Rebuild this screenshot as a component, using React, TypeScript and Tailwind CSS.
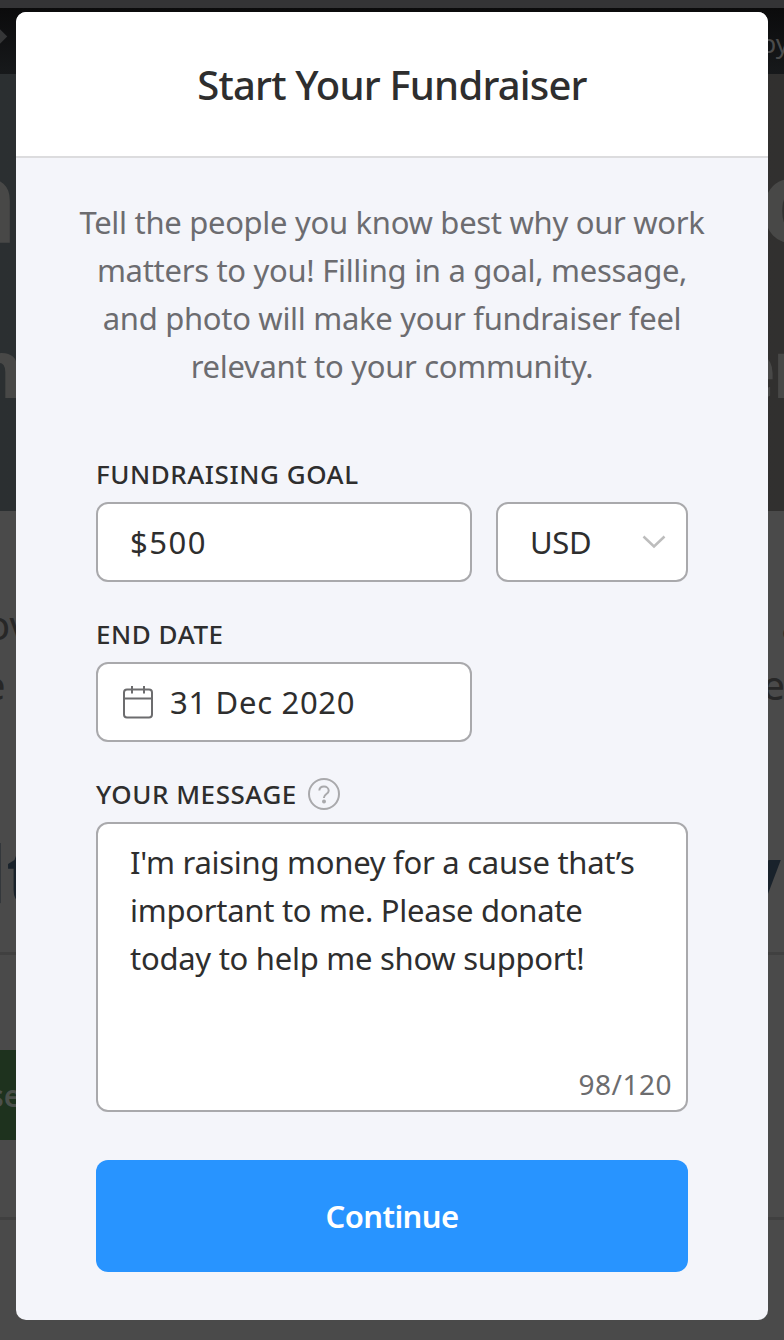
import { useState } from 'react';

const body = 'text-[31px] leading-[48px] text-[#2e2e2e]';
const field = 'flex items-center h-20 bg-white border-2 border-[#a9a9ac] rounded-xl';
const label =
  'text-[26px] leading-8 font-medium uppercase tracking-[0.55px] text-[#2e2e2e]';

function CalendarIcon() {
  return (
    <svg
      width="32"
      height="34"
      viewBox="0 0 32 34"
      fill="none"
      stroke="#6c6c6e"
      strokeWidth="2"
    >
      <rect x="2" y="4.5" width="28" height="28" rx="3" />
      <path d="M2 13.5h28M10 1v7.5M22 1v7.5" />
    </svg>
  );
}

function ChevronIcon() {
  return (
    <svg
      width="24"
      height="14"
      viewBox="0 0 24 14"
      fill="none"
      stroke="#bdbdbd"
      strokeWidth="2.5"
    >
      <path d="M1.5 1.5L12 11.5L22.5 1.5" />
    </svg>
  );
}

function HelpIcon() {
  return (
    <svg
      width="32"
      height="32"
      viewBox="0 0 32 32"
      fill="none"
      stroke="#a9a9ac"
      strokeWidth="2"
    >
      <circle cx="16" cy="16" r="15" />
      <path d="M11.3 12.5C11.5 10 13.5 8.5 16 8.5S20.7 10.2 20.7 12.7C20.7 16 16 16 16 19.5V20" />
      <circle cx="16" cy="23.6" r="2" fill="#a9a9ac" stroke="none" />
    </svg>
  );
}

// The dimmed campaign page behind the modal
function Page() {
  return (
    <div className="flex flex-col h-full overflow-hidden bg-[#4a4a4a] whitespace-nowrap">
      <div className="h-2 shrink-0 bg-[#343436]" />
      <div className="flex justify-between h-[66px] shrink-0 bg-linear-to-b from-[#0b0b0c] to-[#17191b] text-[26px] leading-[66px] text-[#4b4b4b]">
        <span className="size-[11px] -ml-[6px] mt-[23px] rotate-45 bg-[#353637]" />
        <span className="-mr-[5px] mt-[2px]">by</span>
      </div>

      <div className="flex justify-between h-[437px] shrink-0 bg-linear-to-r from-[#2b2f31] to-[#31302f] font-bold text-[#484847]">
        <div className="flex flex-col items-start">
          <span className="-ml-[52px] mt-[54px] text-[117px] leading-[140px]">a</span>
          <span className="-ml-[29px] mt-[49px] text-[80px] leading-[100px]">n</span>
        </div>
        <div className="flex flex-col items-end">
          <span className="-mr-[48px] mt-[54px] text-[117px] leading-[140px]">o</span>
          <span className="-mr-[20px] mt-[49px] text-[80px] leading-[100px] tracking-[-4px]">
            er
          </span>
        </div>
      </div>

      <div className="flex justify-between mt-[84px] text-[40px] leading-[60px] text-[#272727]">
        <span className="-ml-[14px]">ov</span>
        <span className="-mr-[20px]">a</span>
      </div>
      <div className="flex justify-between text-[40px] leading-[60px] text-[#272727]">
        <span className="-ml-[17px]">e w</span>
        <span className="-mr-[1px]">e</span>
      </div>

      <div className="flex justify-between mt-[108px] text-[78px] leading-[100px] font-bold text-[#19222b]">
        <span className="-ml-[17px]">lt</span>
        <span className="-mr-[36px]">vs</span>
      </div>
      <div className="h-[3px] shrink-0 mt-[29px] bg-[#404040]" />

      <div className="flex items-center w-[200px] h-[90px] shrink-0 mt-[95px] bg-[#1e321e] text-[30px] font-semibold text-[#4b504b]">
        <span className="-ml-[11px]">se</span>
      </div>
      <div className="h-[3px] shrink-0 mt-[77px] bg-[#404040]" />
    </div>
  );
}

function FundraiserModal() {
  const [goal, setGoal] = useState('$500');
  const [message, setMessage] = useState(
    "I'm raising money for a cause that’s important to me. Please donate today to help me show support!"
  );

  return (
    <div className="flex flex-col w-[752px] h-[1308px] rounded-[10px] overflow-hidden bg-[#f4f5fa]">
      <div className="flex items-center justify-center h-[146px] bg-white border-b-2 border-[#dcdcde]">
        <h2 className="mt-[2px] text-[40px] leading-[48px] font-medium tracking-[-0.8px] text-[#2e2e2e]">
          Start Your Fundraiser
        </h2>
      </div>

      <p className="mt-[40px] text-center text-[31px] leading-[48px] tracking-[-0.3px] text-[#6c6c70] whitespace-nowrap">
        Tell the people you know best why our work
        <br />
        matters to you! Filling in a goal, message,
        <br />
        and photo will make your fundraiser feel
        <br />
        relevant to your community.
      </p>

      <div className="flex flex-col px-20 mt-[68px]">
        <p className={label}>
          <span>Fundraising goal</span>
        </p>
        <div className="flex mt-3 gap-6">
          <div className={field + ' w-[376px] px-8'}>
            <input
              className={body + ' w-full outline-none tracking-[1.5px]'}
              value={goal}
              onChange={(e) => setGoal(e.target.value)}
            />
          </div>
          <div className={field + ' w-48 pl-8 pr-5 justify-between'}>
            <span className={body + ' tracking-[-0.3px]'}>USD</span>
            <ChevronIcon />
          </div>
        </div>

        <p className={label + ' mt-9'}>
          <span>End date</span>
        </p>
        <div className={field + ' w-[376px] mt-3 pl-6 gap-4'}>
          <CalendarIcon />
          <span className={body + ' tracking-[0.7px]'}>31 Dec 2020</span>
        </div>

        <div className="flex items-center gap-[11px] mt-9">
          <p className={label}>
            <span>Your message</span>
          </p>
          <HelpIcon />
        </div>
        <div className="flex flex-col h-[290px] mt-3 bg-white border-2 border-[#a9a9ac] rounded-xl">
          <textarea
            className={
              body +
              ' grow px-8 pt-[14px] resize-none outline-none tracking-[-0.27px]'
            }
            value={message}
            onChange={(e) => setMessage(e.target.value)}
          />
          <span className="self-end pr-[14px] pb-[10px] text-[28px] leading-8 tracking-[0.5px] text-[#6c6c6e]">
            {message.length}/120
          </span>
        </div>

        <button className="h-28 mt-12 rounded-xl bg-[#2894ff] text-[31px] font-semibold tracking-[-0.6px] text-white">
          Continue
        </button>
      </div>
    </div>
  );
}

function App() {
  return (
    <div className="relative w-[784px] h-[1340px] overflow-hidden font-['Noto_Sans',sans-serif]">
      <Page />
      <div className="absolute inset-0 px-4 py-3">
        <FundraiserModal />
      </div>
    </div>
  );
}

export default App;
